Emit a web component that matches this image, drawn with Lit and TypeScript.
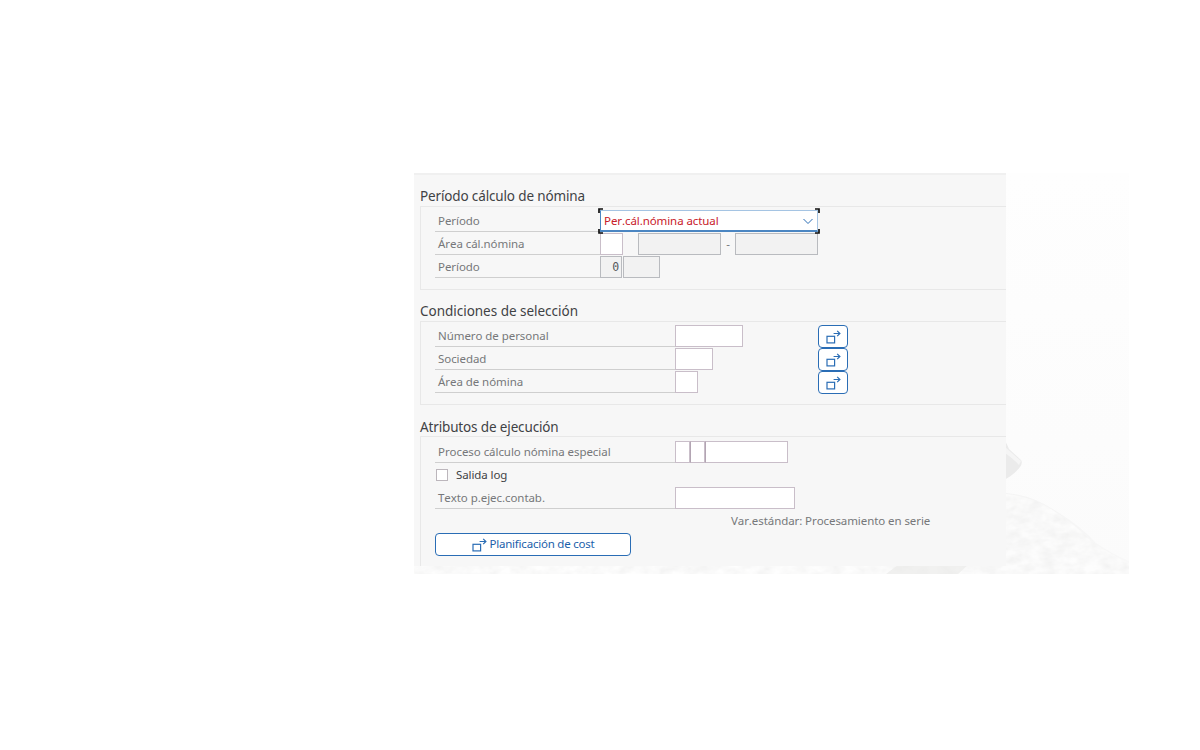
import { LitElement, html, css } from "lit";
import { customElement } from "lit/decorators.js";

@customElement("multi-select-icon")
class MultiSelectIcon extends LitElement {
  static styles = css`
    :host { display: block; width: 15px; height: 14px; }
    svg { display: block; }
  `;
  render() {
    return html`<svg width="15" height="14" viewBox="0 0 15 14" fill="none" stroke="#2a6db5" stroke-width="1.2">
      <rect x="1" y="6.3" width="7.6" height="6.6" />
      <path d="M7.6 3.5H13.6M11.2 0.9L13.9 3.5L11.2 6.1" />
    </svg>`;
  }
}

@customElement("landscape-backdrop")
class LandscapeBackdrop extends LitElement {
  static styles = css`
    :host { display: block; position: absolute; inset: 0; z-index: 0; }
    svg { display: block; }
  `;
  render() {
    return html`<svg width="715" height="401" viewBox="0 0 715 401">
      <defs>
        <linearGradient id="sky" x1="0" y1="0" x2="0" y2="1">
          <stop offset="0" stop-color="#fefefe" /><stop offset="1" stop-color="#fbfbfb" />
        </linearGradient>
        <linearGradient id="rock" gradientUnits="userSpaceOnUse" x1="592" y1="340" x2="715" y2="390">
          <stop offset="0" stop-color="#f4f4f4" /><stop offset="1" stop-color="#f8f8f8" />
        </linearGradient>
        <filter id="mottle" x="0" y="0" width="1" height="1">
          <feTurbulence type="fractalNoise" baseFrequency="0.07 0.12" numOctaves="3" seed="4" />
          <feColorMatrix values="0.2 0 0 0 0.85  0.2 0 0 0 0.85  0.2 0 0 0 0.848  0 0 0 0 0.75" />
          <feComposite in2="SourceGraphic" operator="in" />
        </filter>
      </defs>
      <rect width="715" height="401" fill="url(#sky)" />
      <path d="M560 330Q570 320 592 320Q618 322 642 338Q668 354 682 370Q700 382 715 388V401H560Z" fill="url(#rock)" />
      <path d="M0 390H560V322Q576 319 592 321Q618 323 640 338Q662 352 678 369Q698 382 715 390V401H0Z" fill="#000" filter="url(#mottle)" />
      <path d="M472 401l12-9h70l-10 9Z" fill="#ebebea" opacity="0.7" />
      <path d="M588 264Q592 268 595 276L607 287Q609 290 606 294Q600 302 588 308Z" fill="#ebebeb" />
      <path d="M591 274L607 288L605 292Q600 286 591 280Z" fill="#f5f5f5" />
    </svg>`;
  }
}

@customElement("app-root")
class AppRoot extends LitElement {
  static styles = css`
    :host {
      display: block; box-sizing: border-box; width: 1200px; height: 750px; padding: 173px 0 0 414px;
      background: #fff; overflow: hidden; font-kerning: none;
      font-family: "Noto Sans", "Open Sans", sans-serif; font-size: 11.5px; letter-spacing: -0.06px; color: #76777a;
    }
    * { box-sizing: border-box; }
    .stage { position: relative; width: 715px; height: 401px; overflow: hidden; }
    .panel {
      position: relative; z-index: 1; width: 592px; height: 393px; padding-left: 6px;
      background: #f7f7f7; border-top: 2px solid #f0f0f0; white-space: nowrap; overflow: hidden;
    }
    .title { height: 31px; line-height: 22px; padding-top: 10px; font-size: 13.5px; letter-spacing: -0.14px; color: #3f4245; }
    .loose { letter-spacing: -0.02px; }
    .third { padding-top: 11px; }
    .box { height: 84px; padding: 2px 0 0 14px; border: 1px solid #e8e8e8; border-right: 0; }
    .open { height: 131px; padding-top: 3px; border-bottom: 0; }
    .row { display: flex; height: 23px; }
    .cond { height: 23.2px; }
    .label { width: 165px; height: 23px; padding-left: 3px; line-height: 24px; border-bottom: 1px solid #cfcfcf; }
    .wide { width: 240px; }
    .field { height: 22px; margin-top: 1px; background: #fff; border: 1px solid #c9bec9; }
    .readonly { background: #f2f2f2; border-color: #b9bbbf; }
    .f15 { width: 15px; } .f22 { width: 22px; } .f23 { width: 23px; } .f37 { width: 37px; }
    .f38 { width: 38px; } .f67 { width: 68px; } .f82 { width: 83px; } .f120 { width: 120px; }
    .joined { border-left-color: #b3a5b3; }
    .gap16 { margin-left: 15px; } .gap1 { margin-left: 1px; }
    .dash { width: 14px; text-align: center; line-height: 23px; }
    .num { padding-right: 2px; text-align: right; line-height: 21px; color: #55585c; font-family: "DejaVu Sans Mono", monospace; font-size: 11.5px; }
    .select {
      position: relative; display: flex; justify-content: space-between; align-items: center; width: 218px; height: 22px; margin-top: 1px;
      padding: 0 3px 0 3px; background: #fff; border: 1px solid #a5c4e3; border-left-color: #4b86c2; border-bottom: 2px solid #4b86c2;
      color: #c8202a; letter-spacing: -0.08px;
    }
    .focus { position: absolute; left: -3px; top: -3px; }
    .value { padding-bottom: 1px; }
    .action {
      display: flex; align-items: center; justify-content: center; width: 30px; height: 23px;
      background: #fff; border: 1px solid #2a6db5; border-radius: 4px; color: #1b60aa;
    }
    .push { margin-left: auto; margin-right: 158px; margin-top: 1px; }
    .checkrow { align-items: center; padding-left: 1px; color: #3f4245; letter-spacing: -0.1px; }
    .check { width: 12px; height: 12px; margin-right: 8px; margin-top: 1px; background: #fff; border: 1px solid #bcb6bc; }
    .variant { height: 24px; line-height: 24px; padding-left: 296px; letter-spacing: -0.08px; }
    .plan { width: 196px; gap: 3px; letter-spacing: -0.22px; }
    .plantext { padding-bottom: 3px; }
  `;

  field(kind: string) {
    return html`<div class="field ${kind}"></div>`;
  }

  condition(label: string, kind: string) {
    return html`<div class="row cond">
      <div class="label wide">${label}</div>${this.field(kind)}
      <div class="action push"><multi-select-icon></multi-select-icon></div>
    </div>`;
  }

  render() {
    return html`<div class="stage">
      <landscape-backdrop></landscape-backdrop>
      <div class="panel">
        <div class="title">Período cálculo de nómina</div>
        <div class="box">
          <div class="row">
            <div class="label">Período</div>
            <div class="select">
              <span class="value">Per.cál.nómina actual</span>
              <svg width="12" height="8" viewBox="0 0 12 8" fill="none" stroke="#2a6db5"><path d="M1.5 2L6 6.5L10.5 2" /></svg>
              <svg class="focus" width="222" height="26" viewBox="0 0 222 26" fill="none" stroke="#111" stroke-width="1.7">
                <path d="M1 5V1H5M217 1H221V5M1 21V25H5M217 25H221V21" />
              </svg>
            </div>
          </div>
          <div class="row">
            <div class="label">Área cál.nómina</div>
            ${this.field("f23")}${this.field("f82 readonly gap16")}
            <div class="dash">-</div>${this.field("f82 readonly")}
          </div>
          <div class="row">
            <div class="label">Período</div>
            <div class="field readonly f22 num">0</div>${this.field("f37 readonly gap1")}
          </div>
        </div>
        <div class="title loose">Condiciones de selección</div>
        <div class="box">
          ${this.condition("Número de personal", "f67")}
          ${this.condition("Sociedad", "f38")}
          ${this.condition("Área de nómina", "f23")}
        </div>
        <div class="title third">Atributos de ejecución</div>
        <div class="box open">
          <div class="row">
            <div class="label wide">Proceso cálculo nómina especial</div>
            ${this.field("f15")}${this.field("f15 joined")}${this.field("f82 joined")}
          </div>
          <div class="row checkrow"><div class="check"></div><span>Salida log</span></div>
          <div class="row"><div class="label wide">Texto p.ejec.contab.</div>${this.field("f120")}</div>
          <div class="variant">Var.estándar: Procesamiento en serie</div>
          <div class="action plan"><multi-select-icon></multi-select-icon><span class="plantext">Planificación de cost</span></div>
        </div>
      </div>
    </div>`;
  }
}
